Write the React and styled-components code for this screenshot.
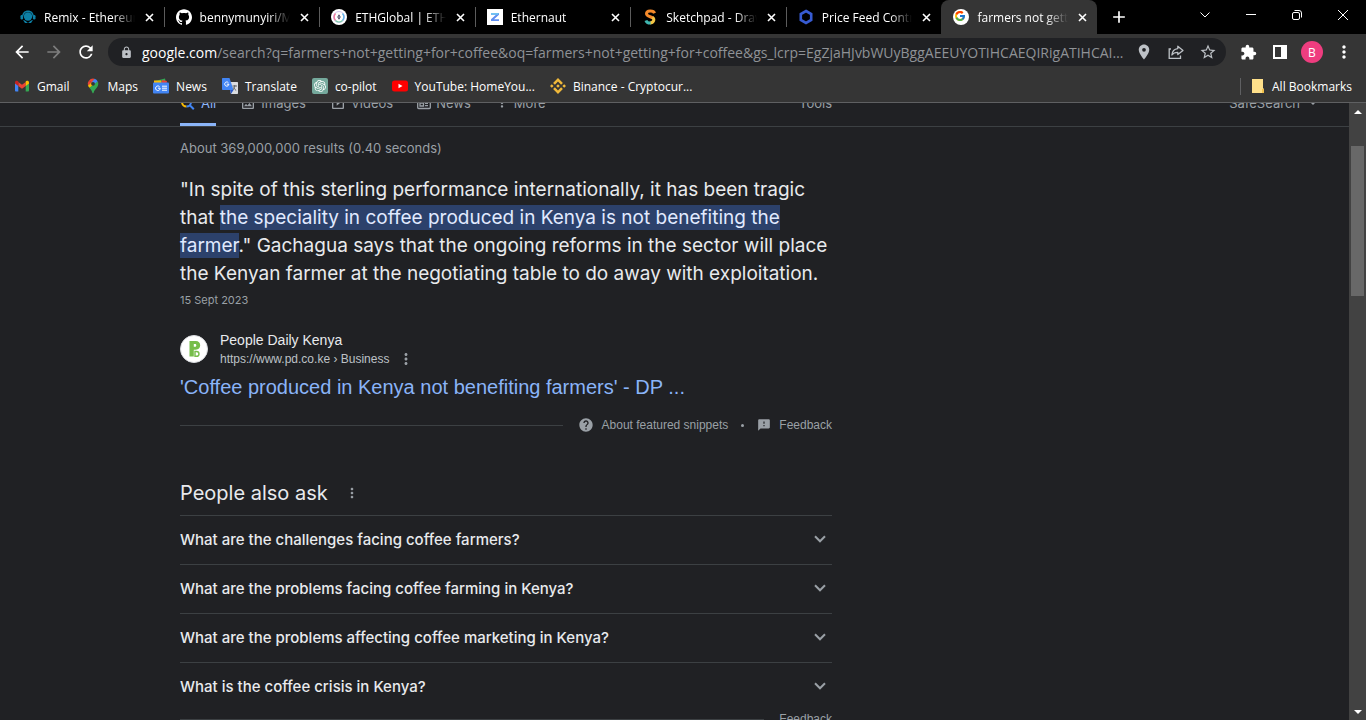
import React from 'react'
import styled, { createGlobalStyle } from "styled-components";
import {
  MdArrowBack,
  MdArrowForward,
  MdRefresh,
  MdLock,
  MdLocationOn,
  MdStarBorder,
  MdExtension,
  MdMoreVert,
  MdAdd,
  MdHelp,
  MdFeedback,
  MdArrowDropDown,
  MdOutlineImage,
  MdOutlineSlideshow,
} from "react-icons/md"
import { FcGoogle } from "react-icons/fc"
import { SiBinance, SiOpenai, SiGithub } from "react-icons/si"

const colors = {
  page: "#202124",
  chrome: "#353535",
  text: "#e8eaed",
  muted: "#9aa0a6",
  link: "#8ab4f8",
  line: "#3c4043",
  mark: "#2c416b",
};

const fonts = {
  ui: `"Open Sans", "Noto Sans", sans-serif`,
  google: `Inter, "Open Sans", sans-serif`,
  arial: `"Liberation Sans", Arial, sans-serif`,
};

const GlobalStyle = createGlobalStyle`
  * { box-sizing: border-box; }
  body {
    margin: 0;
    background: ${colors.page};
    color: ${colors.text};
    font-family: ${fonts.ui};
    font-size: 12px;
  }
  button {
    display: flex;
    align-items: center;
    justify-content: center;
    padding: 0;
    border: none;
    background: none;
    color: inherit;
    font: inherit;
  }
  a { color: inherit; text-decoration: none; }
  svg { display: block; flex: none; }
`;

const Browser = styled.div`
  display: flex;
  flex-direction: column;
  height: 100vh;
  overflow: hidden;
`;

/* tab strip */

const TabStrip = styled.header`
  display: flex;
  height: 34px;
  padding-left: 8px;
  background: #000;
  color: #fff;
`;

const TabList = styled.div`
  display: grid;
  grid-template-columns: repeat(7, 1fr);
  flex: 0 1 1089px;
  min-width: 0;
`;

const Tab = styled.div`
  display: flex;
  align-items: center;
  gap: 8px;
  min-width: 0;
  padding: 0 9px 0 12px;
  border-radius: 8px 8px 0 0;
  background: ${(props) => (props.$active ? colors.chrome : "transparent")};
`;

const TabTitle = styled.button`
  flex: 1;
  justify-content: flex-start;
  min-width: 0;
  overflow: hidden;
  white-space: nowrap;
  mask-image: linear-gradient(to right, #000 76%, transparent);
`;

const TabDivider = styled.span`
  align-self: center;
  width: 1px;
  height: 20px;
  margin-right: -10px;
  background: ${(props) => (props.$hidden ? "transparent" : "#5c5c5c")};
`;

const NewTab = styled.button`
  width: 44px;
`;

const WindowButtons = styled.div`
  display: flex;
  margin-left: auto;
`;

const WindowButton = styled.button`
  width: 46px;
  height: 29px;
`;

/* toolbar */

const Toolbar = styled.div`
  display: flex;
  align-items: center;
  height: 36px;
  padding: 0 6px;
  background: ${colors.chrome};
`;

const ToolButton = styled.button`
  width: 32px;
  height: 28px;
  color: ${(props) => (props.$dim ? "#7d7d7d" : "#fff")};
`;

const AddressBar = styled.form`
  display: flex;
  align-items: center;
  flex: 1;
  min-width: 0;
  height: 28px;
  margin: 0 6px;
  padding: 0 2px 0 12px;
  border-radius: 14px;
  background: ${colors.page};
  color: #bdc1c6;
  font-size: 14px;
  ${ToolButton} { color: #bdc1c6; }
`;

const Host = styled.label`
  margin-left: 9px;
  color: #fff;
`;

const Address = styled.input`
  flex: 1;
  min-width: 0;
  padding: 0;
  border: none;
  outline: none;
  background: none;
  color: #8f9296;
  font: inherit;
  text-overflow: ellipsis;
`;

const Avatar = styled.span`
  display: grid;
  place-items: center;
  width: 22px;
  height: 22px;
  border-radius: 50%;
  background: #ee3d7f;
  color: #fff;
`;

/* bookmarks */

const BookmarkBar = styled.nav`
  display: flex;
  align-items: center;
  gap: 15px;
  height: 33px;
  padding: 0 14px;
  border-bottom: 1px solid #5f6062;
  background: ${colors.chrome};
  color: #fff;
`;

const Bookmark = styled.a`
  display: flex;
  align-items: center;
  gap: 7px;
  white-space: nowrap;
`;

const AllBookmarks = styled(Bookmark)`
  margin-left: auto;
  padding-left: 10px;
  border-left: 1px solid #5f6062;
`;

/* page */

const Viewport = styled.div`
  display: flex;
  flex: 1;
  min-height: 0;
`;

const Page = styled.main`
  flex: 1;
  min-width: 0;
  overflow: hidden;
  font-family: ${fonts.google};
`;

const Filters = styled.nav`
  display: flex;
  align-items: flex-end;
  height: 24px;
  padding: 0 28px 0 180px;
  overflow: hidden;
  border-bottom: 1px solid ${colors.line};
  color: ${colors.muted};
  font-size: 13px;
`;

const FilterList = styled.div`
  display: flex;
  gap: 24px;
  flex: 0 1 652px;
`;

const Filter = styled.a`
  display: flex;
  align-items: center;
  gap: 5px;
  height: 33px;
  padding-bottom: ${(props) => (props.$active ? "10px" : "13px")};
  border-bottom: ${(props) => (props.$active ? `3px solid ${colors.link}` : "none")};
  color: ${(props) => (props.$active ? colors.link : "inherit")};
  line-height: 20px;
  ${(props) => props.$end && "margin-left: auto;"}
`;

const Results = styled.div`
  max-width: 832px;
  padding: 11px 0 0 180px;
`;

const Stats = styled.div`
  color: ${colors.muted};
  font-size: 13px;
  line-height: 20px;
`;

const Snippet = styled.p`
  margin: 18px 0 2px;
  font-size: 19px;
  line-height: 28px;
  white-space: nowrap;
`;

const Mark = styled.mark`
  padding: 1px 0;
  background: ${colors.mark};
  color: #e1eaff;
`;

const SnippetDate = styled.div`
  color: ${colors.muted};
  font-size: 11px;
  line-height: 20px;
`;

const Source = styled.div`
  display: flex;
  align-items: center;
  gap: 12px;
  margin-top: 20px;
  font-family: ${fonts.arial};
`;

const SourceName = styled.div`
  font-size: 14px;
  line-height: 20px;
`;

const SourceUrl = styled.div`
  display: flex;
  align-items: center;
  gap: 8px;
  color: #bdc1c6;
  font-size: 12px;
  line-height: 18px;
`;

const ResultTitle = styled.h3`
  margin: 6px 0 0;
  color: ${colors.link};
  font-family: ${fonts.arial};
  font-size: 20px;
  font-weight: 400;
  line-height: 26px;
`;

const FootLine = styled.div`
  display: flex;
  align-items: center;
  color: ${colors.muted};
  font-family: ${fonts.arial};
  font-size: 12px;
  line-height: 16px;
  &::before {
    content: "";
    flex: 1;
    height: 1px;
    margin-right: 15px;
    background: ${colors.line};
  }
`;

const FootLink = styled.a`
  display: flex;
  align-items: center;
  gap: 8px;
`;

const Dot = styled.span`
  width: 3px;
  height: 3px;
  margin: 0 13px;
  border-radius: 50%;
  background: ${colors.muted};
`;

const AskHeading = styled.div`
  display: flex;
  align-items: center;
  gap: 16px;
  margin-top: 45px;
  padding-bottom: 7px;
  color: ${colors.muted};
`;

const AskTitle = styled.h2`
  margin: 0;
  color: ${colors.text};
  font-size: 20px;
  font-weight: 400;
  line-height: 30px;
`;

const Question = styled.button`
  width: 100%;
  height: 49px;
  justify-content: space-between;
  padding: 0 6px 2px 0;
  border-top: 1px solid ${colors.line};
  font-size: 15px;
  font-weight: 500;
  svg { color: ${colors.muted}; }
`;

const SnippetFoot = styled(FootLine)`
  margin-top: 17px;
`;

/* scrollbar */

const Scrollbar = styled.div`
  display: flex;
  flex-direction: column;
  width: 17px;
  background: #424242;
`;

const ScrollArrow = styled.button`
  height: 17px;
`;

const ScrollTrack = styled.div`
  flex: 1;
  padding: 26px 2px 0;
`;

const ScrollThumb = styled.div`
  height: 27%;
  background: #686868;
`;

const RemixLogo = () => (
  <svg width="16" height="16" viewBox="0 0 16 16" fill="#0d7fa5">
    <path d="M2.2 7C2.4 3.6 4.800 1.500 8 1.500S13.600 3.600 13.800 7h-1.200C12.200 4.500 10.500 2.900 8 2.900S3.800 4.500 3.400 7z" />
    <circle cx="8" cy="7.500" r="4.200" />
    <rect x="0.500" y="6" width="2.600" height="4.500" rx="1.200" />
    <rect x="12.900" y="6" width="2.600" height="4.500" rx="1.200" />
    <path d="M3 11l2 .6L8 14l3-2.400 2-.6-2 3H5z" />
  </svg>
)

const EthGlobalLogo = () => (
  <svg width="16" height="16" viewBox="0 0 16 16" fill="none">
    <circle cx="8" cy="8" r="8" fill="#fff" />
    <circle cx="8" cy="8" r="5.500" stroke="#cfc3ee" />
    <path d="M4.500 4.500c-1.600 2-1.600 5 0 7" stroke="#ef7aa0" strokeWidth="1.400" />
    <path d="M11.500 4.500c1.600 2 1.600 5 0 7" stroke="#63b4ec" strokeWidth="1.400" />
    <path d="M4.500 11.500c2 1.800 5 1.800 7 0" stroke="#7bcaa8" strokeWidth="1.200" />
    <path d="M8 5.200L9.700 8 8 10.800 6.300 8z" fill="#34304f" />
    <circle cx="8" cy="8" r="0.700" fill="#fff" />
  </svg>
)

const EthernautLogo = () => (
  <svg width="16" height="16" viewBox="0 0 16 16">
    <rect width="16" height="16" fill="#fff" />
    <path d="M4 4h8v1.800L7 10.300h5V12H4v-1.800l5-4.500H4z" fill="#5f8df0" />
    <path d="M4 4h8l-1 1.700H4z" fill="#6fc3f2" />
  </svg>
)

const SketchpadLogo = () => (
  <svg width="16" height="16" viewBox="0 0 16 16" fill="none" strokeWidth="3">
    <path d="M12.500 4.200C11.500 1.200 4.500 1.200 4.500 4.800c0 3 5 2.600 7 4.600" stroke="#f58a2b" />
    <path d="M10.500 8.400c2.600 2 1 5.600-2.500 5.600" stroke="#f3c544" />
    <path d="M8.600 14c-2.400.1-4.100-.9-4.700-2.600" stroke="#3fb6b0" />
  </svg>
)

const ChainlinkLogo = () => (
  <svg width="16" height="16" viewBox="0 0 16 16" fill="none" stroke="#375bd2" strokeWidth="2.600">
    <path d="M8 2l5.200 3v6L8 14l-5.200-3V5z" />
  </svg>
)

const GoogleLogo = () => (
  <svg width="16" height="16" viewBox="0 0 16 16">
    <circle cx="8" cy="8" r="8" fill="#fff" />
    <FcGoogle x="1" y="1" width="14" height="14" />
  </svg>
)

const GmailLogo = () => (
  <svg width="16" height="16" viewBox="0 0 16 16">
    <path d="M1 4v8.500c0 .5.400 1 1 1h2.300V6.500z" fill="#4285f4" />
    <path d="M15 4v8.500c0 .5-.4 1-1 1h-2.300V6.500z" fill="#34a853" />
    <path d="M4.300 3.900L8 6.700l3.700-2.800v4L8 10.700 4.300 7.900z" fill="#ea4335" />
    <path d="M1 4.500c0-1.800 1.700-2.300 2.700-1.500l.6.500v4.400L1 5.500z" fill="#c5221f" />
    <path d="M15 4.500c0-1.800-1.700-2.300-2.700-1.500l-.6.500v4.400L15 5.500z" fill="#fbbc04" />
  </svg>
)

const MapsLogo = () => (
  <svg width="16" height="16" viewBox="0 0 16 16">
    <path d="M8 .5a5.300 5.300 0 0 0-4 1.900l3 2.500L10 1z" fill="#ea4335" />
    <path d="M4 2.400a5.400 5.400 0 0 0-1 5L6.700 5z" fill="#ea4335" />
    <path d="M9.700.8L6.500 4.600l3 2.600 3.200-3.800A5.300 5.300 0 0 0 9.700.8z" fill="#4285f4" />
    <path d="M3 7.400c.3.800.8 1.600 1.400 2.400L9.700 7 6.500 4.600z" fill="#fbbc04" />
    <path d="M12.700 3.400L4.400 9.800C5.900 11.600 6.800 12.600 7.300 14.600c.2 1.100 1.200 1.100 1.400 0C9.600 11 13.300 9.500 13.300 5.800c0-.9-.2-1.700-.6-2.400z" fill="#34a853" />
    <circle cx="8" cy="5.800" r="1.900" fill="#353535" />
  </svg>
)

const NewsLogo = () => (
  <svg width="16" height="16" viewBox="0 0 16 16">
    <path d="M2 3l10-2.500L13 5H2z" fill="#34a853" />
    <path d="M1 2.500h7L9 6H1z" fill="#fbbc04" />
    <path d="M9 2l5 1-.5 3H8z" fill="#ea4335" />
    <rect y="4.500" width="16" height="11" rx="1" fill="#4285f4" />
    <path d="M6.600 8.700a2.300 2.300 0 1 0 .6 1.500H5M9 8.200h5M9 10.200h5M9 12.200h5" fill="none" stroke="#fff" />
  </svg>
)

const TranslateLogo = () => (
  <svg width="16" height="16" viewBox="0 0 16 16">
    <path d="M6 4h9c.6 0 1 .4 1 1v10c0 .6-.4 1-1 1H9z" fill="#dadce0" />
    <path d="M1 0h6.500l4 12H1c-.6 0-1-.4-1-1V1c0-.6.400-1 1-1z" fill="#4285f4" />
    <path d="M8 12h3.500L9 16z" fill="#2a56c6" />
    <path d="M6.400 4.700a2.100 2.100 0 1 0 .5 1.500H4.800" fill="none" stroke="#fff" />
    <path d="M10.500 8h4.500M12.800 7v1c-.3 2-1.200 3.200-2 4M11.500 9.500c.6 1.300 1.600 2.200 2.700 3" fill="none" stroke="#5f6368" />
  </svg>
)

const OpenAiLogo = () => (
  <svg width="16" height="16" viewBox="0 0 16 16">
    <rect width="16" height="16" rx="2" fill="#75a99c" />
    <SiOpenai x="2" y="2" width="12" height="12" color="#fff" />
  </svg>
)

const YouTubeLogo = () => (
  <svg width="16" height="16" viewBox="0 0 16 16">
    <rect y="2.500" width="16" height="11" rx="2.500" fill="#f00" />
    <path d="M6.500 5.700v4.600L10.500 8z" fill="#fff" />
  </svg>
)

const FolderIcon = () => (
  <svg width="14" height="16" viewBox="0 0 14 16">
    <path d="M1 1h11v9l1 1v4H1z" fill="#ffe08a" />
    <path d="M11 11h2v4h-2z" fill="#f0c04d" />
  </svg>
)

const ShareIcon = () => (
  <svg width="16" height="16" viewBox="0 0 16 16" fill="none" stroke="currentColor" strokeWidth="1.300">
    <path d="M3 5H1.200v9.300h11.300V11.500" />
    <path d="M9.800 2.200L15 6.400l-5.200 4.200V8.300C7 8.300 5.200 9 3.900 11c.3-3.500 2.400-6 5.900-6.400z" strokeLinejoin="round" />
  </svg>
)

const SidePanelIcon = () => (
  <svg width="16" height="16" viewBox="0 0 16 16" fill="none">
    <rect x="2" y="2" width="12" height="12" stroke="#fff" strokeWidth="2" />
    <path d="M9 2h6v12H9z" fill="#fff" />
  </svg>
)

const NewsFilterIcon = () => (
  <svg width="14" height="14" viewBox="0 0 14 14" fill="none" stroke="currentColor" strokeWidth="1.300">
    <path d="M.7 1.500h12.600v10c0 .6-.4 1-1 1H1.700c-.6 0-1-.4-1-1z" />
    <path d="M3 4.500h8M3 7h3.500v3H3zM8 7.300h3M8 9.700h3" />
  </svg>
)

const SearchIcon = () => (
  <svg width="16" height="16" viewBox="0 0 16 16" fill="none" strokeWidth="2">
    <path d="M2 7a4.500 4.500 0 0 1 4.500-4.500" stroke="#ea4335" />
    <path d="M2 7a4.500 4.500 0 0 0 4.500 4.500" stroke="#fbbc04" />
    <path d="M6.500 11.500A4.500 4.500 0 0 0 11 7M9.800 10.300l4 4" stroke="#4285f4" />
    <path d="M11 7a4.500 4.500 0 0 0-4.500-4.500" stroke="#34a853" />
  </svg>
)

const PeopleDailyLogo = () => (
  <svg width="28" height="28" viewBox="0 0 28 28" fill="none">
    <circle cx="14" cy="14" r="13.500" fill="#fff" stroke="#dadce0" />
    <path fillRule="evenodd" d="M9.500 6h6.300c2.700 0 4.400 1.700 4.400 4.300s-1.700 4.400-4.400 4.400h-2V21.500H9.500zM13.800 9v2.800h1.100c.9 0 1.400-.5 1.400-1.400S15.800 9 14.900 9z" fill="#76bd4a" />
    <path d="M15 16.500h1.500c1.600 0 2.500.9 2.500 2.400s-.9 2.400-2.500 2.400H15z" stroke="#76bd4a" strokeWidth="1.400" />
  </svg>
)

const CloseIcon = () => (
  <svg width="13" height="13" viewBox="0 0 13 13" stroke="#fff" strokeWidth="1.600">
    <path d="M3 3l7 7M10 3l-7 7" />
  </svg>
)

const Chevron = () => (
  <svg width="12" height="8" viewBox="0 0 12 8" fill="none" stroke="#fff">
    <path d="M1.500 1.500L6 6l4.500-4.500" />
  </svg>
)

const ExpandIcon = () => (
  <svg width="12" height="8" viewBox="0 0 12 8" fill="none" stroke="currentColor" strokeWidth="2">
    <path d="M1 1.300l5 5 5-5" />
  </svg>
)

const RestoreIcon = () => (
  <svg width="10" height="10" viewBox="0 0 10 10" fill="none" stroke="#fff">
    <rect x=".5" y="2.500" width="7" height="7" rx="1.500" />
    <path d="M2.500.500H7A2.500 2.500 0 0 1 9.500 3v4.500" />
  </svg>
)

const Triangle = ({ down }) => (
  <svg width="8" height="4" viewBox="0 0 8 4" fill="#fff">
    <path d={down ? "M0 0h8L4 4z" : "M0 4h8L4 0z"} />
  </svg>
)

const tabs = [
  { title: "Remix - Ethereum", icon: <RemixLogo /> },
  { title: "bennymunyiri/M", icon: <SiGithub size={16} /> },
  { title: "ETHGlobal | ETHG", icon: <EthGlobalLogo /> },
  { title: "Ethernaut", icon: <EthernautLogo /> },
  { title: "Sketchpad - Draw", icon: <SketchpadLogo /> },
  { title: "Price Feed Contr", icon: <ChainlinkLogo /> },
  { title: "farmers not getti", icon: <GoogleLogo />, active: true },
];

const bookmarks = [
  { name: "Gmail", icon: <GmailLogo /> },
  { name: "Maps", icon: <MapsLogo /> },
  { name: "News", icon: <NewsLogo /> },
  { name: "Translate", icon: <TranslateLogo /> },
  { name: "co-pilot", icon: <OpenAiLogo /> },
  { name: "YouTube: HomeYou...", icon: <YouTubeLogo /> },
  { name: "Binance - Cryptocur...", icon: <SiBinance size={16} color="#f0b93a" /> },
];

const questions = [
  "What are the challenges facing coffee farmers?",
  "What are the problems facing coffee farming in Kenya?",
  "What are the problems affecting coffee marketing in Kenya?",
  "What is the coffee crisis in Kenya?",
];

function App() {
  return (
    <Browser>
      <GlobalStyle />
      <TabStrip>
        <TabList>
          {tabs.map((tab, i) => (
            <Tab key={tab.title} $active={tab.active}>
              {tab.icon}
              <TabTitle>{tab.title}</TabTitle>
              <button aria-label="Close tab"><CloseIcon /></button>
              <TabDivider $hidden={i >= 5} />
            </Tab>
          ))}
        </TabList>
        <NewTab aria-label="New tab"><MdAdd size={20} /></NewTab>
        <WindowButtons>
          <WindowButton aria-label="Search tabs"><Chevron /></WindowButton>
          <WindowButton aria-label="Minimise">
            <svg width="10" height="1"><path d="M0 .5h10" stroke="#fff" /></svg>
          </WindowButton>
          <WindowButton aria-label="Restore"><RestoreIcon /></WindowButton>
          <WindowButton aria-label="Close">
            <svg width="10" height="10"><path d="M0 0l10 10M10 0L0 10" stroke="#fff" /></svg>
          </WindowButton>
        </WindowButtons>
      </TabStrip>

      <Toolbar>
        <ToolButton aria-label="Back"><MdArrowBack size={20} /></ToolButton>
        <ToolButton aria-label="Forward" $dim><MdArrowForward size={20} /></ToolButton>
        <ToolButton aria-label="Reload"><MdRefresh size={20} /></ToolButton>
        <AddressBar>
          <MdLock size={13} />
          <Host htmlFor="address">google.com</Host>
          <Address
            id="address"
            type="text"
            defaultValue="/search?q=farmers+not+getting+for+coffee&oq=farmers+not+getting+for+coffee&gs_lcrp=EgZjaHJvbWUyBggAEEUYOTIHCAEQIRigATIHCAIQI..."
          />
          <ToolButton type="button" aria-label="Location"><MdLocationOn size={18} /></ToolButton>
          <ToolButton type="button" aria-label="Share"><ShareIcon /></ToolButton>
          <ToolButton type="button" aria-label="Bookmark this page"><MdStarBorder size={18} /></ToolButton>
        </AddressBar>
        <ToolButton aria-label="Extensions"><MdExtension size={17} /></ToolButton>
        <ToolButton aria-label="Side panel"><SidePanelIcon /></ToolButton>
        <ToolButton aria-label="Profile"><Avatar>B</Avatar></ToolButton>
        <ToolButton aria-label="Menu"><MdMoreVert size={20} /></ToolButton>
      </Toolbar>

      <BookmarkBar>
        {bookmarks.map((item) => (
          <Bookmark key={item.name} href="#">{item.icon}{item.name}</Bookmark>
        ))}
        <AllBookmarks href="#"><FolderIcon />All Bookmarks</AllBookmarks>
      </BookmarkBar>

      <Viewport>
        <Page>
          <Filters>
            <FilterList>
              <Filter href="#" $active><SearchIcon />All</Filter>
              <Filter href="#"><MdOutlineImage size={16} />Images</Filter>
              <Filter href="#"><MdOutlineSlideshow size={16} />Videos</Filter>
              <Filter href="#"><NewsFilterIcon />News</Filter>
              <Filter href="#"><MdMoreVert size={14} />More</Filter>
              <Filter href="#" $end>Tools</Filter>
            </FilterList>
            <Filter href="#" $end>SafeSearch<MdArrowDropDown size={16} /></Filter>
          </Filters>

          <Results>
            <Stats>About 369,000,000 results (0.40 seconds)</Stats>
            <Snippet>
              "In spite of this sterling performance internationally, it has been tragic<br />
              that <Mark>the speciality in coffee produced in Kenya is not benefiting the<br />
              farmer</Mark>." Gachagua says that the ongoing reforms in the sector will place<br />
              the Kenyan farmer at the negotiating table to do away with exploitation.
            </Snippet>
            <SnippetDate>15 Sept 2023</SnippetDate>

            <Source>
              <PeopleDailyLogo />
              <div>
                <SourceName>People Daily Kenya</SourceName>
                <SourceUrl>
                  https://www.pd.co.ke › Business
                  <button aria-label="About this result"><MdMoreVert size={18} color={colors.muted} /></button>
                </SourceUrl>
              </div>
            </Source>
            <ResultTitle><a href="#">'Coffee produced in Kenya not benefiting farmers' - DP ...</a></ResultTitle>

            <SnippetFoot>
              <FootLink href="#"><MdHelp size={16} />About featured snippets</FootLink>
              <Dot />
              <FootLink href="#"><MdFeedback size={14} />Feedback</FootLink>
            </SnippetFoot>

            <AskHeading>
              <AskTitle>People also ask</AskTitle>
              <button aria-label="About these results"><MdMoreVert size={16} /></button>
            </AskHeading>
            {questions.map((question) => (
              <Question key={question} aria-expanded="false">
                {question}
                <ExpandIcon />
              </Question>
            ))}
            <FootLine><FootLink href="#">Feedback</FootLink></FootLine>
          </Results>
        </Page>

        <Scrollbar>
          <ScrollArrow aria-label="Scroll up"><Triangle /></ScrollArrow>
          <ScrollTrack><ScrollThumb /></ScrollTrack>
          <ScrollArrow aria-label="Scroll down"><Triangle down /></ScrollArrow>
        </Scrollbar>
      </Viewport>
    </Browser>
  )
}

export default App
